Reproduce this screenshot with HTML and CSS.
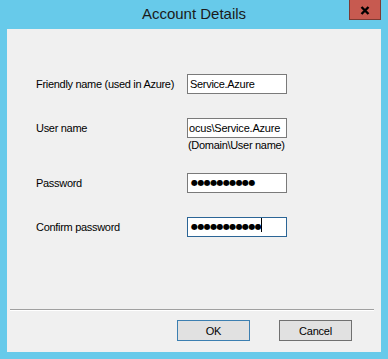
FILE: index.html
```html
<!DOCTYPE html>
<html lang="en">
<head>
    <meta charset="UTF-8">
    <title>Account Details</title>
    <link rel="stylesheet" href="styles.css">
</head>
<body>
    <div class="titlebar">
        <span></span>
        <div class="title">Account Details</div>
        <div class="close-button">
            <svg width="10" height="9" viewBox="0 0 10 9">
                <path d="M1.5 1 L8.5 8 M8.5 1 L1.5 8" stroke="#000" stroke-width="2.4" />
            </svg>
        </div>
    </div>

    <div class="content">
        <div class="fields">
            <div class="field first">
                <div class="label">Friendly name (used in Azure)</div>
                <div class="textbox">Service.Azure</div>
            </div>

            <div class="field">
                <div class="label">User name</div>
                <div class="input-group">
                    <div class="textbox scrolled">ocus\Service.Azure</div>
                    <div class="hint">(Domain\User name)</div>
                </div>
            </div>

            <div class="field after-hint">
                <div class="label">Password</div>
                <div class="textbox dots">&#9679;&#9679;&#9679;&#9679;&#9679;&#9679;&#9679;&#9679;&#9679;&#9679;</div>
            </div>

            <div class="field">
                <div class="label">Confirm password</div>
                <div class="textbox dots focused">&#9679;&#9679;&#9679;&#9679;&#9679;&#9679;&#9679;&#9679;&#9679;&#9679;&#9679;<span class="caret"></span></div>
            </div>
        </div>

        <div class="footer">
            <div class="separator"></div>
            <div class="buttons">
                <button class="default">OK</button>
                <button>Cancel</button>
            </div>
        </div>
    </div>
</body>
</html>
```

FILE: styles.css
```css
body {
    margin: 0;
    width: 388px;
    height: 359px;
    background-color: #67caea;
    font-family: "Liberation Sans", Arial, sans-serif;
    font-size: 11px;
    letter-spacing: -0.3px;
    color: #000;
    overflow: hidden;
}

.titlebar {
    display: grid;
    grid-template-columns: 1fr auto 1fr;
    height: 29px;
}

.title {
    font-size: 15px;
    letter-spacing: 0;
    color: #1b1b1b;
    line-height: 15px;
    padding-top: 6px;
}

.close-button {
    justify-self: end;
    margin-right: 7px;
    width: 30px;
    height: 18px;
    background-color: #c75a50;
    border: 1px solid #7c3a33;
    border-top: none;
    display: flex;
    align-items: center;
    justify-content: center;
    padding-top: 1px;
    box-sizing: content-box;
}

.content {
    margin: 0 7px;
    height: 323px;
    background-color: #f0f0f0;
    display: flex;
    flex-direction: column;
}

.fields {
    padding: 45px 0 0 29px;
}

.field {
    display: flex;
    align-items: flex-start;
    margin-top: 24px;
}

.field.first {
    margin-top: 0;
}

.field.after-hint {
    margin-top: 21px;
}

.label {
    width: 151px;
    line-height: 20px;
    color: #000;
}

.textbox {
    box-sizing: border-box;
    width: 100px;
    height: 20px;
    border: 1px solid #7a7a7a;
    background-color: #fff;
    padding: 0 2px;
    line-height: 18px;
    white-space: nowrap;
    overflow: hidden;
}

.textbox.scrolled {
    padding: 0 1px;
    letter-spacing: -0.2px;
}

.textbox.focused {
    border-color: #2b6596;
}

.dots {
    font-family: "DejaVu Sans", sans-serif;
    font-size: 8px;
    letter-spacing: -0.6px;
    padding-left: 3px;
}

.caret {
    display: inline-block;
    width: 1px;
    height: 14px;
    background-color: #000;
    vertical-align: -3px;
    margin-left: 0;
}

.hint {
    margin-top: 1px;
    line-height: 13px;
    padding-left: 1px;
}

.footer {
    margin-top: auto;
    padding-bottom: 11px;
}

.separator {
    margin: 0 7px 0 3px;
    height: 1px;
    background-color: #a0a0a0;
    border-bottom: 1px solid #fff;
}

.buttons {
    display: flex;
    justify-content: flex-end;
    gap: 29px;
    margin-top: 9px;
    padding-right: 29px;
}

button {
    box-sizing: border-box;
    width: 73px;
    height: 21px;
    margin: 0;
    padding: 0;
    font-family: "Liberation Sans", Arial, sans-serif;
    font-size: 11px;
    letter-spacing: -0.2px;
    color: #000;
    background-color: #e1e1e1;
    border: 1px solid #707070;
    border-radius: 0;
}

button.default {
    border-color: #3c7fb1;
}
```
